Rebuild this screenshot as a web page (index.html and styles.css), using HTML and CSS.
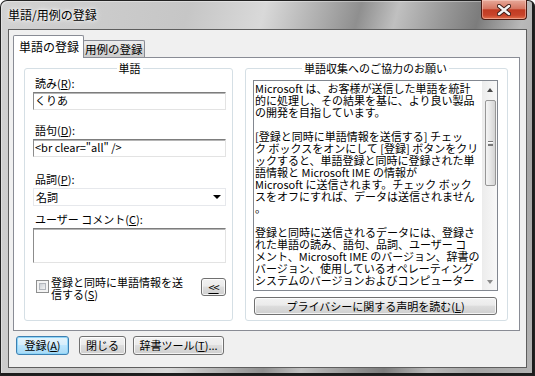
FILE: index.html
```html
<!DOCTYPE html>
<html lang="ja">
<head>
    <meta charset="UTF-8">
    <title>単語/用例の登録</title>
    <link rel="stylesheet" href="styles.css">
</head>
<body>
    <div class="window">
        <div class="titlebar">
            <span class="title">単語/用例の登録</span>
            <div class="close-btn">
                <svg width="14" height="12" viewBox="0 0 14 12">
                    <path d="M2 2 L12 10 M12 2 L2 10" stroke="#3b1a14" stroke-width="4.2" stroke-linecap="round"/>
                    <path d="M2 2 L12 10 M12 2 L2 10" stroke="#f4f4f4" stroke-width="2.4" stroke-linecap="round"/>
                </svg>
            </div>
        </div>

        <div class="client">
            <div class="tabs">
                <div class="tab active">単語の登録</div>
                <div class="tab">用例の登録</div>
            </div>

            <div class="panel">
                <fieldset class="group word-group">
                    <legend>単語</legend>

                    <div class="field">
                        <div class="field-label">読み(<u>R</u>):</div>
                        <div class="textbox">くりあ</div>
                    </div>

                    <div class="field field-2">
                        <div class="field-label">語句(<u>D</u>):</div>
                        <div class="textbox">&lt;br clear="all" /&gt;</div>
                    </div>

                    <div class="field field-3">
                        <div class="field-label">品詞(<u>P</u>):</div>
                        <div class="combo">
                            <span>名詞</span>
                            <span class="combo-arrow"></span>
                        </div>
                    </div>

                    <div class="field field-4">
                        <div class="field-label">ユーザー コメント(<u>C</u>):</div>
                        <div class="textbox comment"></div>
                    </div>

                    <div class="check-row">
                        <span class="checkbox"><span></span></span>
                        <span class="check-label">登録と同時に単語情報を送<br>信する(<u>S</u>)</span>
                        <button class="btn btn-collapse"><u>&lt;&lt;</u></button>
                    </div>
                </fieldset>

                <fieldset class="group info-group">
                    <legend>単語収集へのご協力のお願い</legend>

                    <div class="message-box">
                        <div class="message">Microsoft は、お客様が送信した単語を統計<br>的に処理し、その結果を基に、より良い製品<br>の開発を目指しています。<br><br>[登録と同時に単語情報を送信する] チェッ<br>ク ボックスをオンにして [登録] ボタンをクリ<br>ックすると、単語登録と同時に登録された単<br>語情報と Microsoft IME の情報が<br>Microsoft に送信されます。チェック ボック<br>スをオフにすれば、データは送信されません<br>。<br><br>登録と同時に送信されるデータには、登録さ<br>れた単語の読み、語句、品詞、ユーザー コ<br>メント、Microsoft IME のバージョン、辞書の<br>バージョン、使用しているオペレーティング<br>システムのバージョンおよびコンピューター</div>
                        <div class="scrollbar">
                            <div class="scroll-arrow"><span class="arrow-up"></span></div>
                            <div class="scroll-thumb"><span class="grip"></span></div>
                            <div class="scroll-arrow bottom"><span class="arrow-down"></span></div>
                        </div>
                    </div>

                    <button class="btn btn-privacy">プライバシーに関する声明を読む(<u>L</u>)</button>
                </fieldset>
            </div>

            <div class="actions">
                <button class="btn btn-default btn-register">登録(<u>A</u>)</button>
                <button class="btn btn-close">閉じる</button>
                <button class="btn btn-tools">辞書ツール(<u>T</u>)...</button>
            </div>
        </div>
    </div>
</body>
</html>
```

FILE: styles.css
```css
* {
    margin: 0;
    padding: 0;
    box-sizing: border-box;
}

body {
    width: 535px;
    height: 376px;
    overflow: hidden;
    background: #ffffff;
    color: #000;
    font-family: "Noto Sans CJK JP", "Liberation Sans", sans-serif;
    font-size: 11px;
}

/* window frame */
.window {
    width: 535px;
    height: 376px;
    display: flex;
    flex-direction: column;
    border-radius: 7px 7px 0 0;
    background: linear-gradient(105deg, #d2d2d2 0%, #c6c6c6 30%, #d9d9d9 42%, #a9a9a9 52%, #8f8f8f 57%, #c0c0c0 63%, #9a9a9a 70%, #7c7c7c 76%, #b9b9b9 83%, #a5a5a5 90%, #b4b4b4 100%);
    box-shadow: inset 0 0 0 1px #222, inset -3px -3px 0 #1c1c1c, inset 2px 2px 0 rgba(255, 255, 255, 0.35);
}

.titlebar {
    height: 29px;
    display: flex;
    align-items: flex-start;
    padding: 0 8px;
}

.title {
    margin-top: 7px;
    font-size: 12px;
    line-height: 15px;
    text-shadow: 0 0 6px #fff, 0 0 3px #fff;
}

.close-btn {
    margin-left: auto;
    width: 46px;
    height: 20px;
    border: 1px solid #4b1a12;
    border-top: none;
    border-radius: 0 0 4px 4px;
    background: linear-gradient(#e7a999 0%, #d67763 45%, #c13b22 52%, #c8442b 80%, #e2714c 100%);
    box-shadow: inset 0 0 0 1px rgba(255, 220, 210, 0.45);
    display: flex;
    align-items: center;
    justify-content: center;
}

/* client area */
.client {
    flex: 1;
    margin: 0 8px 8px 8px;
    background: #f0f0f0;
    border: 1px solid #5e5e5e;
    padding: 5px 6px 0 4px;
    display: flex;
    flex-direction: column;
}

.tabs {
    display: flex;
    align-items: flex-end;
    height: 22px;
}

.tab {
    font-size: 11.5px;
    line-height: 14px;
    border: 1px solid #898c95;
    border-bottom: none;
    border-radius: 2px 2px 0 0;
    white-space: nowrap;
}

.tab.active {
    position: relative;
    z-index: 1;
    width: 71px;
    height: 23px;
    margin-bottom: -1px;
    padding: 4px 0 0 5px;
    font-size: 12px;
    background: #fff;
}

.tab:not(.active) {
    width: 62px;
    height: 17px;
    margin-left: -1px;
    padding: 1px 0 0 1px;
    background: linear-gradient(#ececec 0%, #e2e2e2 45%, #d6d6d6 50%, #cdcdcd 100%);
}

.panel {
    height: 274px;
    border: 1px solid #898c95;
    background: #fff;
    display: flex;
    gap: 12px;
    padding: 4px 11px 9px 10px;
}

.group {
    border: 1px solid #d5dfe5;
    border-radius: 3px;
    min-width: 0;
}

.group legend {
    margin: 0 auto;
    padding: 0 2px;
    line-height: 12px;
}

.word-group {
    width: 209px;
    padding: 3px 6px 0 8px;
}

.info-group {
    flex: 1;
    padding: 6px 9px 0 7px;
}

/* left side fields */
.field-label {
    line-height: 12px;
    padding-left: 2px;
}

.field-2 {
    margin-top: 14px;
}

.field-3 {
    margin-top: 16px;
}

.field-4 {
    margin-top: 7px;
}

.textbox {
    margin-top: 3px;
    height: 18px;
    padding-left: 1px;
    line-height: 15px;
    border: 1px solid;
    border-color: #7d7d7d #e3e3e3 #e3e3e3 #8c8c8c;
    box-shadow: inset 0 1px 0 #b5b5b5;
    background: #fff;
    white-space: nowrap;
}

.textbox.comment {
    height: 35px;
}

.combo {
    margin-top: 3px;
    height: 18px;
    padding-left: 2px;
    border: 1px solid #e6e8ec;
    display: flex;
    align-items: center;
}

.combo-arrow {
    margin-left: auto;
    margin-right: 4px;
    border-left: 4px solid transparent;
    border-right: 4px solid transparent;
    border-top: 4px solid #000;
}

.check-row {
    margin-top: 15px;
    display: flex;
    align-items: flex-start;
}

.checkbox {
    margin: 2px 0 0 3px;
    width: 13px;
    height: 13px;
    border: 1px solid #8e8f8f;
    background: #f4f4f4;
    padding: 2px;
}

.checkbox span {
    display: block;
    width: 100%;
    height: 100%;
    border: 1px solid #b2b6bc;
    background: linear-gradient(135deg, #cdd1d6, #f3f3f3);
}

.check-label {
    margin: -2px 0 0 2px;
    line-height: 12px;
    white-space: nowrap;
}

/* buttons */
.btn {
    font-family: inherit;
    font-size: 11px;
    color: #000;
    height: 19px;
    border: 1px solid #707070;
    border-radius: 3px;
    background: linear-gradient(#f2f2f2 0%, #ebebeb 45%, #dddddd 50%, #cfcfcf 100%);
    box-shadow: inset 0 0 0 1px rgba(255, 255, 255, 0.75);
    line-height: 15px;
    display: flex;
    align-items: center;
    justify-content: center;
    white-space: nowrap;
}

.btn-collapse {
    margin-left: auto;
    width: 25px;
    height: 18px;
    letter-spacing: -1px;
}

.btn-default {
    border-color: #3c7fb1;
    background: linear-gradient(#e5f4fc 0%, #d7eefb 45%, #bee6fd 50%, #a7d9f5 100%);
    box-shadow: inset 0 0 0 1px #8fd5f8;
}

/* right side message */
.message-box {
    height: 211px;
    border: 1px solid #828790;
    display: flex;
    background: #fff;
}

.message {
    flex: 1;
    padding: 1px 0 0 1px;
    line-height: 12px;
    white-space: nowrap;
    overflow: hidden;
}

.scrollbar {
    width: 15px;
    display: flex;
    flex-direction: column;
    border-left: 1px solid #ececec;
    background: linear-gradient(to right, #ededed, #f8f8f8);
}

.scroll-arrow {
    height: 17px;
    display: flex;
    align-items: center;
    justify-content: center;
}

.scroll-arrow.bottom {
    margin-top: auto;
}

.arrow-up {
    border-left: 3px solid transparent;
    border-right: 3px solid transparent;
    border-bottom: 4px solid #4a4a4a;
}

.arrow-down {
    border-left: 3px solid transparent;
    border-right: 3px solid transparent;
    border-top: 4px solid #8a8a8a;
}

.scroll-thumb {
    margin: 2px 1px 0 2px;
    height: 86px;
    border: 1px solid #979797;
    border-radius: 2px;
    background: linear-gradient(to right, #f5f5f5, #e6e6e6 50%, #d4d4d4);
    display: flex;
    align-items: center;
    justify-content: center;
}

.grip {
    width: 5px;
    height: 5px;
    border-top: 1px solid #777;
    border-bottom: 1px solid #777;
    background: linear-gradient(#fff 0 1px, transparent 1px 2px, #777 2px 3px, transparent 3px);
}

.btn-privacy {
    margin: 6px 0 0 1px;
    width: 243px;
    height: 18px;
}

/* bottom buttons */
.actions {
    margin-top: 5px;
    padding-left: 3px;
    display: flex;
}

.btn-register {
    width: 53px;
}

.btn-close {
    width: 47px;
    margin-left: 10px;
}

.btn-tools {
    width: 91px;
    margin-left: 7px;
}
```
